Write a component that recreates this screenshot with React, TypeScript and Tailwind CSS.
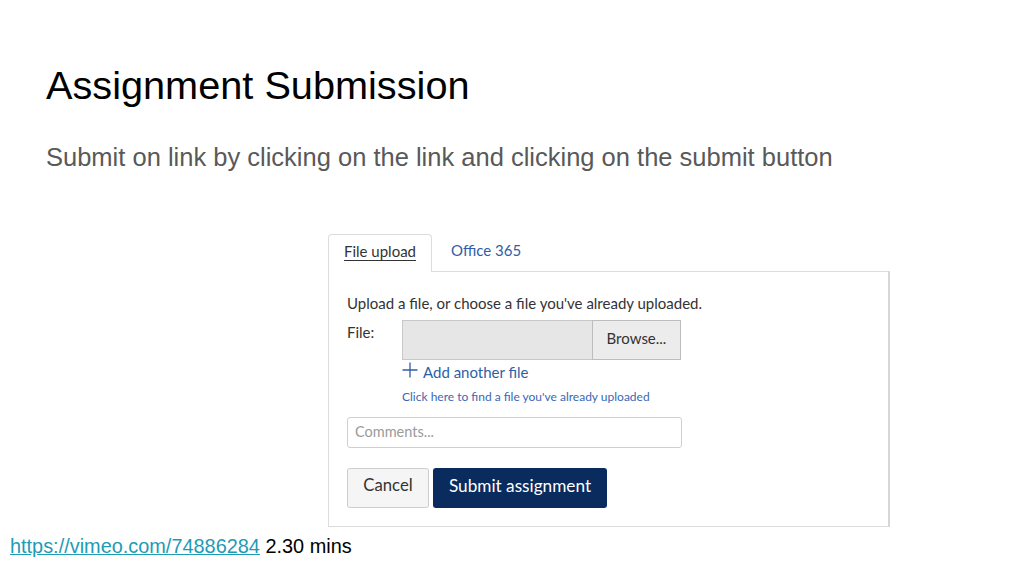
import React from 'react';

const lato = { fontFamily: 'Lato, "Open Sans", sans-serif' };

const SubmissionForm: React.FC = () => {
  return (
    <div className="ml-[328px] w-[562px] mt-[62px]" style={lato}>
      {/* tabs */}
      <div className="flex items-end h-[38px]">
        <div className="relative z-10 h-[38px] -mb-px flex items-center pl-[15px] pr-[15px] pb-[4px] border border-b-0 border-[#dcdcdc] rounded-t-[4px] bg-white">
          <span className="text-[15px] text-[#333] underline underline-offset-[3px] decoration-[#333]">File upload</span>
        </div>
        <div className="h-[38px] flex items-center pl-[19px] pb-[4px]">
          <span className="text-[15px] text-[#2f5ea6]">Office 365</span>
        </div>
      </div>

      {/* panel */}
      <div className="border border-[#dcdcdc] border-r-2 border-r-[#d6d6d6] pl-[18px] pt-[21px] pb-[18px] bg-white">
        <p className="text-[15px] leading-[20px] text-[#333]">
          Upload a file, or choose a file you've already uploaded.
        </p>

        <div className="flex mt-[7px]">
          <div className="w-[55px] text-[15px] leading-[20px] pt-[2px] text-[#333]">File:</div>
          <div>
            <div className="flex h-[40px]">
              <div className="w-[190px] bg-[#e6e6e6] border border-[#c8c8c8] border-r-0" />
              <div className="w-[89px] bg-[#ececec] border border-[#bdbdbd] flex items-center justify-center pb-[4px] text-[15px] text-[#333]">
                Browse...
              </div>
            </div>
            <div className="flex items-center h-[24px] text-[#2f5ea6]">
              <svg width="16" height="16" viewBox="0 0 16 16" className="mr-[5px] -mt-[4px]">
                <path d="M8 0.5V15.5M0.5 8H15.5" stroke="#2f5ea6" strokeWidth="1.3" fill="none" />
              </svg>
              <span className="text-[15px]">Add another file</span>
            </div>
            <div className="mt-[6px] text-[12px] leading-[14px] text-[#3a68b4]">
              Click here to find a file you've already uploaded
            </div>
          </div>
        </div>

        <div className="mt-[13px] w-[335px] h-[31px] border border-[#cfcfcf] rounded-[3px] flex items-center px-[7px] pb-[2px] text-[14.5px] text-[#9a9a9a]">
          Comments...
        </div>

        <div className="flex gap-[4px] mt-[20px]">
          <button className="w-[82px] h-[40px] pb-[4px] bg-[#f5f5f5] border border-[#cccccc] rounded-[3px] text-[16.7px] text-[#333]">
            Cancel
          </button>
          <button className="w-[174px] h-[40px] pb-[4px] bg-[#0a2b5e] rounded-[3px] text-[17.2px] text-white">
            Submit assignment
          </button>
        </div>
      </div>
    </div>
  );
};

export default function App() {
  return (
    <div
      className="w-[1024px] h-[576px] bg-white flex flex-col overflow-hidden"
      style={{ fontFamily: '"Liberation Sans", Arial, sans-serif' }}
    >
      <div className="px-[46px] pt-[61px]">
        <h1 className="text-[39.7px] leading-[48px] text-black">Assignment Submission</h1>
        <p className="mt-[34px] text-[25.5px] leading-[28px] text-[#595959]">
          Submit on link by clicking on the link and clicking on the submit button
        </p>
      </div>

      <SubmissionForm />

      <div className="px-[10px] mt-[7px] text-[19.9px] leading-[24px]">
        <a href="https://vimeo.com/74886284" className="text-[#1e9bb5] underline">
          https://vimeo.com/74886284
        </a>{' '}
        <span className="text-black">2.30 mins</span>
      </div>
    </div>
  );
}
